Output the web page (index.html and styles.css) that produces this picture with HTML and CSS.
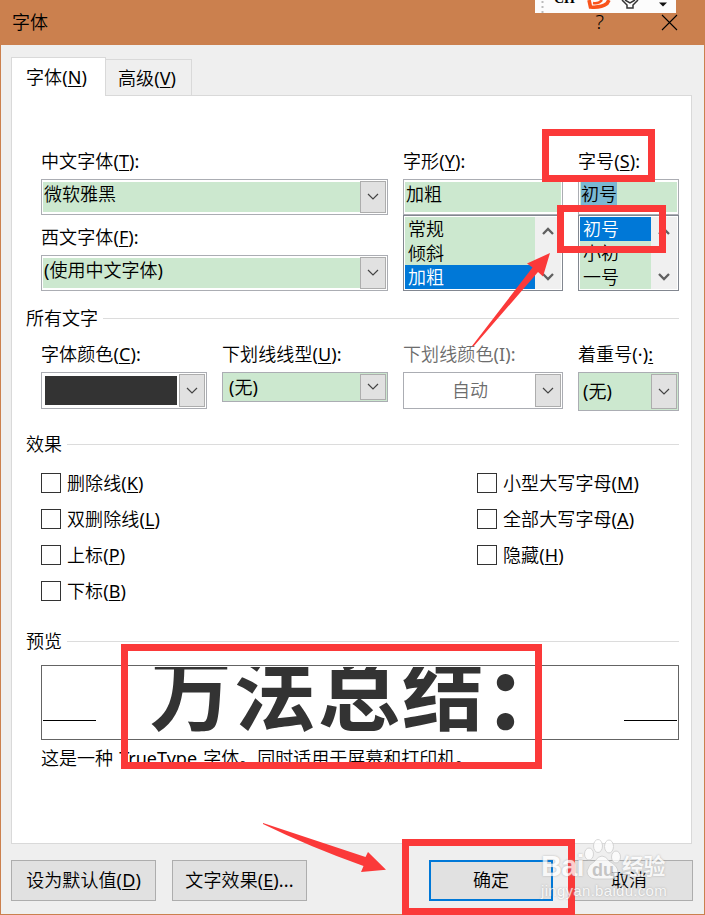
FILE: index.html
```html
<!DOCTYPE html>
<html lang="zh-CN">
<head>
<meta charset="utf-8">
<title>字体</title>
<link rel="stylesheet" href="styles.css">
</head>
<body>
<div class="window">
  <header class="titlebar">
    <h1 class="title">字体</h1>
    <span class="help">?</span>
    <svg class="close" width="17" height="17" viewBox="0 0 17 17"><path d="M1 1 16 16M16 1 1 16"/></svg>
  </header>

  <main class="body">
    <nav class="tabs">
      <div class="tab active">字体(<u>N</u>)</div>
      <div class="tab">高级(<u>V</u>)</div>
    </nav>
    <section class="panel">
      <div class="fonts">
        <div class="col names">
          <div class="label">中文字体(<u>T</u>):</div>
          <div class="combo inset"><div class="value">微软雅黑</div><div class="drop"><svg viewBox="0 0 12 7"><path d="m1 1 5 5 5-5"/></svg></div></div>
          <div class="label second">西文字体(<u>F</u>):</div>
          <div class="combo inset"><div class="value">(使用中文字体)</div><div class="drop"><svg viewBox="0 0 12 7"><path d="m1 1 5 5 5-5"/></svg></div></div>
        </div>
        <div class="col">
          <div class="label">字形(<u>Y</u>):</div>
          <div class="combo inset"><div class="value">加粗</div></div>
          <div class="list">
            <div class="items"><div>常规</div><div>倾斜</div><div class="selected">加粗</div></div>
            <div class="scroll"><svg viewBox="0 0 12 9"><path d="m1 7 5-5 5 5"/></svg><svg viewBox="0 0 12 9"><path d="m1 2 5 5 5-5"/></svg></div>
          </div>
        </div>
        <div class="col">
          <div class="label">字号(<u>S</u>):</div>
          <div class="combo inset"><div class="value"><span class="marked">初号</span></div></div>
          <div class="list">
            <div class="items"><div class="selected">初号</div><div>小初</div><div>一号</div></div>
            <div class="scroll"><svg viewBox="0 0 12 9"><path d="m1 7 5-5 5 5"/></svg><svg viewBox="0 0 12 9"><path d="m1 2 5 5 5-5"/></svg></div>
          </div>
        </div>
      </div>

      <h2 class="group all">所有文字</h2>
      <div class="styles">
        <div class="col">
          <div class="label">字体颜色(<u>C</u>):</div>
          <div class="combo plain"><div class="swatch"></div><div class="drop"><svg viewBox="0 0 12 7"><path d="m1 1 5 5 5-5"/></svg></div></div>
        </div>
        <div class="col">
          <div class="label">下划线线型(<u>U</u>):</div>
          <div class="combo green short"><div class="value">(无)</div><div class="drop"><svg viewBox="0 0 12 7"><path d="m1 1 5 5 5-5"/></svg></div></div>
        </div>
        <div class="col disabled">
          <div class="label">下划线颜色(I):</div>
          <div class="combo plain"><div class="value auto">自动</div><div class="drop"><svg viewBox="0 0 12 7"><path d="m1 1 5 5 5-5"/></svg></div></div>
        </div>
        <div class="col">
          <div class="label">着重号(·)<u>:</u></div>
          <div class="combo green tall"><div class="value">(无)</div><div class="drop"><svg viewBox="0 0 12 7"><path d="m1 1 5 5 5-5"/></svg></div></div>
        </div>
      </div>

      <h2 class="group effects">效果</h2>
      <div class="checks">
        <div class="checkcol">
          <div class="check"><i></i><span>删除线(<u>K</u>)</span></div>
          <div class="check"><i></i><span>双删除线(<u>L</u>)</span></div>
          <div class="check"><i></i><span>上标(<u>P</u>)</span></div>
          <div class="check"><i></i><span>下标(<u>B</u>)</span></div>
        </div>
        <div class="checkcol">
          <div class="check"><i></i><span>小型大写字母(<u>M</u>)</span></div>
          <div class="check"><i></i><span>全部大写字母(<u>A</u>)</span></div>
          <div class="check"><i></i><span>隐藏(<u>H</u>)</span></div>
        </div>
      </div>

      <h2 class="group preview-title">预览</h2>
      <div class="preview"><span class="rule"></span><span class="sample">万法总结<b>：</b></span><span class="rule"></span></div>
      <p class="note">这是一种 TrueType 字体。同时适用于屏幕和打印机。</p>
    </section>

    <footer class="buttons">
      <div class="button default">设为默认值(<u>D</u>)</div>
      <div class="button effect">文字效果(<u>E</u>)...</div>
      <div class="button ok">确定</div>
      <div class="button cancel">取消</div>
    </footer>
  </main>
</div>

<div class="ime">
  <svg width="141" height="13" viewBox="0 0 141 13">
    <rect width="141" height="13" fill="#fcfcfc"/>
    <path d="M7.5 1v12" stroke="#bbb" stroke-width="2" stroke-dasharray="2 3"/>
    <path d="M54 0 55.5 7Q66 8 72 3.5L74 0" fill="none" stroke="#f9541b" stroke-width="3.6"/>
    <path d="M58 3Q64 4 67 0" fill="none" stroke="#f9541b" stroke-width="2.5"/>
    <path d="M87 0 92 5V8H98V5L103 0M90 0 95 3 100 0" fill="none" stroke="#333" stroke-width="1.5"/>
    <path d="M124 2.5h8l-4 4z" fill="#111"/>
  </svg>
  <span class="lang">CH</span>
</div>

<div class="mark size-label"></div>
<div class="mark size-item"></div>
<div class="mark sample-mark"></div>
<div class="mark ok-mark"></div>
<svg class="arrows" width="705" height="915" viewBox="0 0 705 915">
  <path d="M550 253 527 263.5 532.5 267.5 472 346 473.5 346.5 538 272 543 276.5Z"/>
  <path d="M263 823 365.5 857 368 852 386 869.7 361 872 363.5 866Q310 847 263 824Z"/>
</svg>

<div class="watermark">
  <div class="brand">
    <span class="bai">Bai</span>
    <svg class="paw" width="38" height="44" viewBox="0 0 38 44">
      <g fill="#fff" stroke="#ccc"><ellipse cx="5" cy="15" rx="4.5" ry="6"/><ellipse cx="14" cy="7" rx="4.5" ry="6.5"/><ellipse cx="25" cy="7.5" rx="4.5" ry="6.5"/><ellipse cx="32" cy="18" rx="4.5" ry="6"/><path d="M18 17Q22 17 25 22 34 27 34 33 33 40 26 40H11Q3 39 3 32 4 26 11 22 14 17 18 17Z"/></g>
      <text x="8" y="37">du</text>
    </svg>
    <span class="jingyan">经验</span>
  </div>
  <div class="url">jingyan.baidu.com</div>
</div>
</body>
</html>
```

FILE: styles.css
```css
* { box-sizing: border-box; }
body {
  margin: 0;
  width: 705px;
  height: 915px;
  position: relative;
  overflow: hidden;
  font: 400 18px/24px "Noto Sans", "Noto Sans CJK SC DemiLight", "Noto Sans CJK SC", sans-serif;
  color: #000;
}
u { text-decoration: underline; text-decoration-thickness: 1px; text-underline-offset: 2px; }
h1, h2, p { margin: 0; font-size: inherit; font-weight: inherit; }

.window { height: 915px; border: 1px solid #cb804e; background: #efefef; }
.titlebar { height: 44px; display: flex; align-items: center; padding: 0 26px 2px 11px; background: #cb804e; }
.title { flex: 1; }
.help { font-size: 20px; font-weight: 300; margin-right: 57px; }
.close { fill: none; stroke: #000; stroke-width: 1.1; }

.body { padding: 12px 11px 0 10px; }
.tabs { display: flex; align-items: flex-end; height: 39px; }
.tab { width: 87px; height: 37px; margin-left: -1px; padding: 6px 0 0 12px; border: 1px solid #d9d9d9; white-space: nowrap; }
.tab.active { width: 95px; height: 39px; margin-left: 0; padding: 7px 0 0 14px; border-bottom: 0; background: #fff; z-index: 1; }
.tab, .label, .check, .button { letter-spacing: .1px; }
.panel { width: 681px; height: 749px; margin-top: -1px; padding: 53px 12px 0 14px; border: 1px solid #d9d9d9; background: #fff; }

.fonts { display: grid; grid-template-columns: 347px 160px 101px; gap: 15px; margin-left: 15px; }
.label { height: 24px; margin-bottom: 6px; white-space: nowrap; }
.label.second { margin-top: 10px; }
.combo { display: flex; height: 36px; border: 1px solid #abadb3; background: #fff; }
.inset { padding: 1px; }
.value { flex: 1; white-space: nowrap; }
.inset .value { height: 30px; margin-top: 1px; padding: 0 0 0 1px; background: #cce8cf; }
.marked { background: #7ab8d2; display: inline-block; height: 23px; line-height: 24px; }
.drop { width: 26px; display: flex; align-items: center; justify-content: center; padding: 0 1px 1px 0; border: 1px solid #adadad; background: #e1e1e1; }
.drop svg { width: 12px; height: 7px; fill: none; stroke: #444; stroke-width: 1.2; }
.list { display: flex; height: 76px; padding: 1px; border: 1px solid #828790; background: #fff; }
.items { flex: 1; height: 72px; padding: 0; background: #cce8cf; }
.items div { padding-left: 3px; height: 24px; }
.items .selected { background: #0078d7; color: #fff; }
.scroll { width: 26px; display: flex; flex-direction: column; justify-content: space-between; align-items: center; padding: 10px 0 8px; background: #f0f0f0; }
.scroll svg { width: 12px; height: 9px; fill: none; stroke: #606060; stroke-width: 2.3; }

.group { display: flex; align-items: center; gap: 5px; height: 24px; }
.group::after { content: ""; flex: 1; height: 1px; background: #dcdcdc; }
.group.all { margin-top: 15px; }
.styles { display: grid; grid-template-columns: 166px 166px 160px 101px; gap: 15px; height: 69px; margin: 12px 0 0 15px; }
.plain { height: 37px; padding: 1px; }
.swatch { flex: 1; margin: 2px; background: #333; }
.green { background: #cce8cf; padding: 1px; }
.short { height: 30px; }
.short .value { padding: 1px 0 0 5px; }
.tall { height: 39px; }
.tall .value { padding: 5px 0 0 3px; }
.auto { text-align: center; padding: 4px 0 0; }
.disabled { color: #6d6d6d; }

.effects { margin-top: 21px; }
.checks { display: grid; grid-template-columns: 436px 1fr; height: 144px; margin: 9px 0 0 15px; }
.check { display: flex; align-items: center; gap: 6px; height: 36px; white-space: nowrap; }
.check i { width: 20px; height: 20px; border: 1px solid #333; }
.preview-title { margin-top: 20px; }
.preview { display: flex; align-items: flex-start; justify-content: space-between; height: 75px; margin: 12px 0 0 15px; padding: 1px; border: 1px solid #646464; overflow: hidden; }
.rule { width: 53px; height: 1px; margin-top: 53px; background: #000; }
.sample { width: 420px; height: 71px; overflow: hidden; font: 700 82px/43px "Noto Sans CJK SC", sans-serif; letter-spacing: 2px; color: #333; white-space: nowrap; }
.sample b { display: inline-block; margin: 5px 0 0 -1px; vertical-align: top; font-weight: 900; letter-spacing: 0; }
.note { margin: 6px 0 0 15px; word-spacing: 1.5px; }

.buttons { display: flex; margin-top: 16px; }
.button { height: 41px; padding-top: 7px; border: 1px solid #adadad; background: #e1e1e1; text-align: center; white-space: nowrap; }
.default { width: 145px; margin-right: 16px; }
.effect { width: 135px; margin-right: 122px; }
.ok { width: 124px; margin-right: 15px; padding-top: 6px; border: 2px solid #0078d7; }
.cancel { width: 125px; flex-shrink: 0; padding-right: 3px; }

.ime { position: absolute; left: 535px; top: 0; width: 141px; height: 13px; overflow: hidden; }
.ime svg { display: block; }
.lang { position: absolute; left: 19px; top: -10px; font: bold 14px/18px "Liberation Serif", serif; }

.mark { position: absolute; border: 7px solid #fb3939; }
.size-label { left: 542px; top: 129px; width: 113px; height: 53px; }
.size-item { left: 557px; top: 205px; width: 109px; height: 48px; }
.sample-mark { left: 121px; top: 644px; width: 421px; height: 125px; }
.ok-mark { left: 402px; top: 839px; width: 173px; height: 76px; }
.arrows { position: absolute; left: 0; top: 0; fill: #fb3939; }

.watermark { position: absolute; left: 541px; top: 839px; width: 130px; opacity: .75; color: #fff; text-shadow: 0 0 2px #999; }
.brand { display: flex; align-items: flex-end; height: 44px; }
.bai { width: 43px; font: bold 29px/34px "Liberation Sans", sans-serif; letter-spacing: -.8px; }
.paw { width: 38px; flex-shrink: 0; overflow: visible; }
.paw text { font: bold 18px "Liberation Sans", sans-serif; fill: #bbb; text-shadow: none; }
.jingyan { font: bold 22px/38px "Noto Sans CJK SC", sans-serif; white-space: nowrap; letter-spacing: -.5px; }
.url { font: 15px/16px "Liberation Sans", sans-serif; letter-spacing: .3px; }
```
